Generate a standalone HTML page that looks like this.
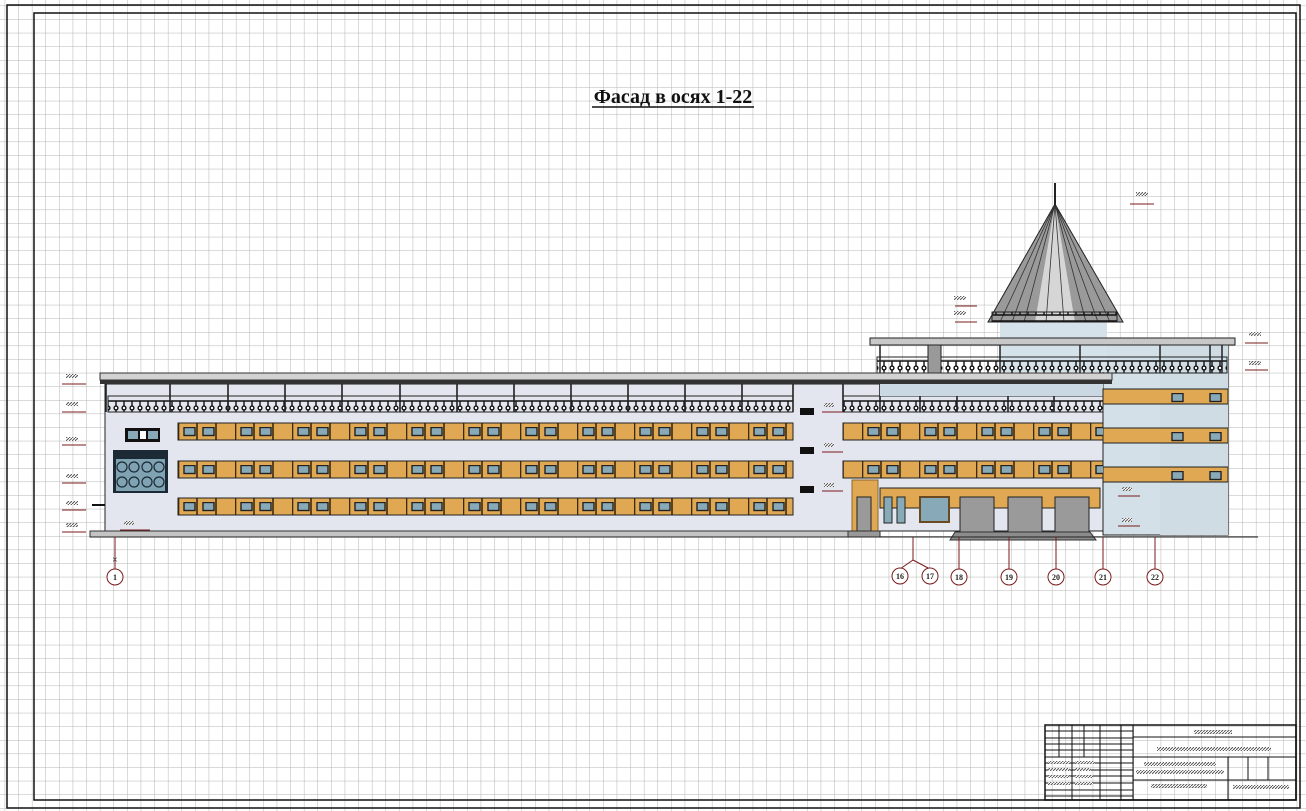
<!DOCTYPE html>
<html><head><meta charset="utf-8"><style>
html,body{margin:0;padding:0;background:#fff;}
svg{display:block;}
</style></head><body>
<svg width="1306" height="811" viewBox="0 0 1306 811" xmlns="http://www.w3.org/2000/svg" font-family="Liberation Serif, serif">
<defs>
<pattern id="grid" x="4.7" y="5.6" width="13.6" height="13.6" patternUnits="userSpaceOnUse">
<path d="M0 0H13.6M0 0V13.6" stroke="#b4b4b4" stroke-width="1" fill="none"/>
</pattern>
<pattern id="band" x="178" y="0" width="57" height="811" patternUnits="userSpaceOnUse">
<rect x="0" y="0" width="57" height="811" fill="#e0a852"/>
<path d="M0.5 0V811M19 0V811M38 0V811" stroke="#3a2a10" stroke-width="1.6"/>
</pattern>
<pattern id="win" x="178" y="0" width="57" height="10" patternUnits="userSpaceOnUse">
<rect x="6" y="0.5" width="11" height="8" fill="#88a9b8" stroke="#222" stroke-width="1.4"/>
<rect x="25" y="0.5" width="11" height="8" fill="#88a9b8" stroke="#222" stroke-width="1.4"/>
</pattern>
<pattern id="rail" x="0" y="0" width="8" height="20" patternUnits="userSpaceOnUse">
<path d="M0 1H8M0 15H8M4 1V15" stroke="#111" stroke-width="1.4"/>
<circle cx="4" cy="8" r="2.6" fill="#111"/>
<circle cx="4" cy="8" r="1.2" fill="#fff"/>
</pattern>
<pattern id="hatch" width="3" height="3" patternUnits="userSpaceOnUse">
<rect width="3" height="3" fill="#fff"/><path d="M0 3L3 0" stroke="#555" stroke-width="1"/>
</pattern>
</defs>
<rect width="1306" height="811" fill="#fff"/>
<rect width="1306" height="811" fill="url(#grid)"/>
<rect x="7" y="5" width="1293" height="803" fill="none" stroke="#111" stroke-width="1.5"/>
<rect x="34" y="13" width="1262" height="787" fill="none" stroke="#111" stroke-width="1.5"/>

<text x="673" y="103" text-anchor="middle" font-size="20" font-weight="bold" fill="#111">Фасад в осях 1-22</text>
<line x1="592" y1="107" x2="754" y2="107" stroke="#111" stroke-width="1.5"/>

<rect x="105" y="384" width="1000" height="147" fill="#e3e5ef" stroke="#222" stroke-width="1"/>
<rect x="1103" y="345" width="125" height="190" fill="#d3e0e8" stroke="#222" stroke-width="1"/>
<rect x="1160" y="345" width="68" height="190" fill="#cfdce3"/>
<rect x="1000" y="322" width="107" height="50" fill="#d5e2ea"/>
<polygon points="1055,204 988,322 1123,322" fill="#9a9a9a" stroke="#222" stroke-width="1"/>
<polygon points="1055,204 1035,322 1075,322" fill="#d6d6d6"/>
<path d="M1055 204L1000 322M1055 204L1012 322M1055 204L1024 322M1055 204L1046 322M1055 204L1064 322M1055 204L1086 322M1055 204L1098 322M1055 204L1110 322" stroke="#333" stroke-width="0.8"/>
<rect x="992" y="312" width="125" height="10" fill="url(#rail)" stroke="#222"/>
<line x1="1055" y1="183" x2="1055" y2="206" stroke="#222" stroke-width="2"/>
<rect x="870" y="338" width="365" height="7" fill="#c8c8c8" stroke="#222"/>
<rect x="877" y="357" width="350" height="16" fill="url(#rail)" stroke="#222"/>
<rect x="928" y="345" width="13" height="28" fill="#999" stroke="#222"/>
<path d="M880 345V373M1000 345V373M1080 345V373M1160 345V373M1210 345V373M1222 345V373" stroke="#222" stroke-width="1.5"/>
<rect x="100" y="373" width="1012" height="7" fill="#d2d2d2" stroke="#333"/>
<rect x="100" y="380" width="1012" height="4" fill="#333"/>
<rect x="108" y="396" width="685" height="16" fill="url(#rail)" stroke="#222"/>
<rect x="843" y="396" width="260" height="16" fill="url(#rail)" stroke="#222"/>
<path d="M106 384V412M170 384V412M228 384V412M285 384V412M342 384V412M400 384V412M457 384V412M514 384V412M571 384V412M628 384V412M685 384V412M742 384V412M793 384V412M843 384V412M880 384V412M920 384V412M957 384V412M1008 384V412M1054 384V412" stroke="#222" stroke-width="1.6"/>
<rect x="880" y="384" width="223" height="12" fill="#c9d8e2"/>
<g stroke="#222" stroke-width="1">
<rect x="178" y="423" width="615" height="17" fill="url(#band)"/>
<rect x="178" y="461" width="615" height="17" fill="url(#band)"/>
<rect x="178" y="498" width="615" height="17" fill="url(#band)"/>
<rect x="843" y="423" width="260" height="17" fill="url(#band)"/>
<rect x="843" y="461" width="260" height="17" fill="url(#band)"/>
<rect x="1103" y="389" width="125" height="15" fill="#e0a852"/>
<rect x="1103" y="428" width="125" height="15" fill="#e0a852"/>
<rect x="1103" y="467" width="125" height="15" fill="#e0a852"/>
</g>
<g transform="translate(0,427)"><rect x="178" y="0" width="615" height="10" fill="url(#win)"/><rect x="843" y="0" width="260" height="10" fill="url(#win)"/></g>
<g transform="translate(0,465)"><rect x="178" y="0" width="615" height="10" fill="url(#win)"/><rect x="843" y="0" width="260" height="10" fill="url(#win)"/></g>
<g transform="translate(0,502)"><rect x="178" y="0" width="615" height="10" fill="url(#win)"/></g>
<g transform="translate(0,393)"><rect x="1170" y="0" width="57" height="10" fill="url(#win)"/></g>
<g transform="translate(0,432)"><rect x="1170" y="0" width="57" height="10" fill="url(#win)"/></g>
<g transform="translate(0,471)"><rect x="1170" y="0" width="57" height="10" fill="url(#win)"/></g>
<rect x="125" y="428" width="35" height="14" fill="#111"/>
<rect x="128" y="431" width="10" height="8" fill="#88a9b8"/><rect x="140" y="431" width="6" height="8" fill="#fff"/><rect x="148" y="431" width="10" height="8" fill="#88a9b8"/>
<rect x="113" y="450" width="55" height="43" fill="#1c2a35"/>
<rect x="116" y="459" width="49" height="32" fill="#7fa3b3"/>
<g fill="none" stroke="#1c2a35" stroke-width="1.2"><circle cx="122" cy="467" r="5"/><circle cx="134" cy="467" r="5"/><circle cx="147" cy="467" r="5"/><circle cx="159" cy="467" r="5"/><circle cx="122" cy="482" r="5"/><circle cx="134" cy="482" r="5"/><circle cx="147" cy="482" r="5"/><circle cx="159" cy="482" r="5"/></g>
<rect x="800" y="408" width="14" height="7" fill="#111"/><rect x="800" y="447" width="14" height="7" fill="#111"/><rect x="800" y="486" width="14" height="7" fill="#111"/>
<rect x="880" y="488" width="220" height="20" fill="#e0a852" stroke="#222"/>
<rect x="852" y="480" width="26" height="52" fill="#e0a852" stroke="#8a6a30"/>
<rect x="857" y="497" width="14" height="35" fill="#9a9a9a" stroke="#222"/>
<rect x="884" y="497" width="8" height="26" fill="#88a9b8" stroke="#222"/><rect x="897" y="497" width="8" height="26" fill="#88a9b8" stroke="#222"/>
<rect x="920" y="497" width="29" height="25" fill="#88a9b8" stroke="#6a4a20" stroke-width="2"/>
<rect x="960" y="497" width="34" height="35" fill="#9a9a9a" stroke="#222"/>
<rect x="1008" y="497" width="34" height="35" fill="#9a9a9a" stroke="#222"/>
<rect x="1055" y="497" width="34" height="35" fill="#9a9a9a" stroke="#222"/>
<rect x="90" y="531" width="758" height="6" fill="#c4c4c4" stroke="#333"/>
<rect x="848" y="531" width="32" height="6" fill="#999" stroke="#333"/>
<polygon points="955,532 1090,532 1096,540 950,540" fill="#8c8c8c" stroke="#333"/>
<line x1="90" y1="537" x2="1258" y2="537" stroke="#222" stroke-width="1"/>
<line x1="92" y1="505" x2="105" y2="505" stroke="#111" stroke-width="2"/>

<g stroke="#7a1b1b" stroke-width="1" fill="#fff">
<path d="M115 537V569M913 537V560L900 569M913 560L930 569M959 537V569M1009 537V569M1056 537V569M1103 537V569M1155 537V569" fill="none"/>
<circle cx="115" cy="577" r="8"/><circle cx="900" cy="576" r="8"/><circle cx="930" cy="576" r="8"/><circle cx="959" cy="577" r="8"/><circle cx="1009" cy="577" r="8"/><circle cx="1056" cy="577" r="8"/><circle cx="1103" cy="577" r="8"/><circle cx="1155" cy="577" r="8"/>
</g>
<g font-size="8" font-weight="bold" text-anchor="middle" fill="#222">
<text x="115" y="580">1</text><text x="900" y="579">16</text><text x="930" y="579">17</text><text x="959" y="580">18</text><text x="1009" y="580">19</text><text x="1056" y="580">20</text><text x="1103" y="580">21</text><text x="1155" y="580">22</text>
</g>
<text x="115" y="563" font-size="10" text-anchor="middle" fill="#222">×</text>

<g stroke="#7a1b1b" stroke-width="1" fill="none">
<path d="M62 384H86M62 412H86M62 445H86M62 483H86M62 510H86M62 532H86"/>
<path d="M822 412H843M822 452H843M822 491H843M1118 496H1140M1118 526H1140M1130 204H1154M955 306H977M955 322H977M1245 343H1268M1245 370H1268M120 530H150"/>
</g>
<g fill="url(#hatch)">
<rect x="66" y="374" width="12" height="4"/><rect x="66" y="402" width="12" height="4"/><rect x="66" y="437" width="12" height="4"/><rect x="66" y="474" width="12" height="4"/><rect x="66" y="501" width="12" height="4"/><rect x="66" y="523" width="12" height="4"/>
<rect x="824" y="403" width="10" height="4"/><rect x="824" y="443" width="10" height="4"/><rect x="824" y="483" width="10" height="4"/>
<rect x="1122" y="487" width="10" height="4"/><rect x="1122" y="518" width="10" height="4"/>
<rect x="1136" y="192" width="12" height="4"/><rect x="954" y="296" width="12" height="4"/><rect x="954" y="311" width="12" height="4"/>
<rect x="1249" y="332" width="12" height="4"/><rect x="1249" y="361" width="12" height="4"/><rect x="124" y="521" width="10" height="4"/>
</g>

<g stroke="#111" stroke-width="1" fill="none">
<rect x="1045" y="725" width="251" height="75" stroke-width="1.5"/>
<path d="M1133 725V800M1133 737H1296M1133 757H1296M1133 780H1296M1228 757V800M1248 757V780M1268 757V780"/>
<path d="M1045 731H1133M1045 738H1133M1045 744H1133M1045 750H1133M1045 757H1133M1045 763H1133M1045 770H1133M1045 776H1133M1045 783H1133M1045 790H1133M1045 796H1133"/>
<path d="M1059 725V757M1072 725V800M1084 725V757M1100 725V800M1121 725V800"/>
</g>
<g fill="url(#hatch)">
<rect x="1194" y="730" width="38" height="4"/><rect x="1157" y="747" width="114" height="4"/>
<rect x="1144" y="762" width="72" height="4"/><rect x="1136" y="770" width="88" height="4"/>
<rect x="1151" y="784" width="56" height="4"/><rect x="1233" y="785" width="56" height="4"/>
<rect x="1048" y="761" width="22" height="3"/><rect x="1048" y="768" width="22" height="3"/><rect x="1048" y="775" width="22" height="3"/><rect x="1048" y="782" width="22" height="3"/>
<rect x="1075" y="761" width="20" height="3"/><rect x="1075" y="768" width="16" height="3"/><rect x="1075" y="775" width="18" height="3"/><rect x="1075" y="782" width="18" height="3"/>
</g>
</svg>
</body></html>
